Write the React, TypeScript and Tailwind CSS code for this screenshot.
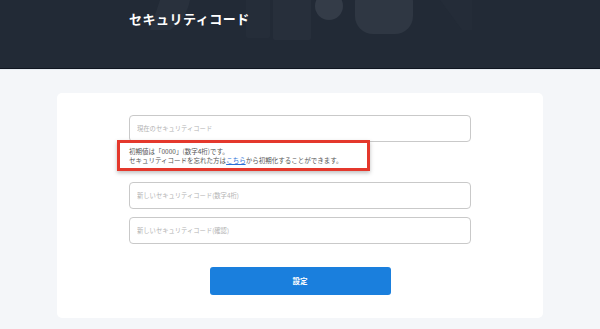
import React from "react";

const jp = { fontFamily: '"Noto Sans CJK JP", "Noto Sans", sans-serif' };

const Field: React.FC<{ placeholder: string }> = ({ placeholder }) => (
  <input
    type="text"
    placeholder={placeholder}
    className="block h-[27px] w-full rounded-[4px] border border-[#c9c9c9] bg-white px-[7px] text-[6.3px] text-[#333] outline-none placeholder:text-[#b3b3b3]"
    style={jp}
  />
);

// faint background shapes behind the page title
const HeaderArt = () => (
  <svg className="absolute left-0 top-0" width="600" height="68" viewBox="0 0 600 68">
    <path d="M160 0 H190 Q186 20 170 30 H150 Z" fill="#29313d" />
    <rect x="273" y="-6" width="38" height="46" rx="2" fill="#272f3b" />
    <rect x="246" y="-6" width="24" height="44" rx="2" fill="#252d39" />
    <circle cx="329" cy="6" r="14" fill="#343c48" />
    <rect x="355" y="-16" width="58" height="50" rx="18" fill="#2f3743" />
    <path d="M440 0 L462 30 H472 V0 Z" fill="#242c38" />
  </svg>
);

export default function App() {
  return (
    <div className="min-h-[329px] w-[600px] bg-[#f4f6f9]" style={jp}>
      <header className="relative h-[69px] overflow-hidden border-b border-[#0f1520] bg-[#222a36]">
        <HeaderArt />
        <div className="relative mx-auto w-[342px] pt-[9px]">
          <h1 className="text-[13px] font-bold leading-[20px] tracking-[0.5px] text-white">
            セキュリティコード
          </h1>
        </div>
      </header>
      <div className="h-px bg-[#e6ebf1]" />

      <main className="pt-[23px]">
        <div className="mx-auto w-[486px] rounded-[5px] bg-white pb-[23px] pt-[22px]">
          <div className="mx-auto w-[342px]">
            <Field placeholder="現在のセキュリティコード" />

            <div className="relative mt-[5px] text-[6.5px] leading-[9px] text-[#555]">
              <p>初期値は「0000」(数字4桁)です。</p>
              <p>
                セキュリティコードを忘れた方は
                <span className="text-[#2a6fd6] underline">こちら</span>
                から初期化することができます。
              </p>
              <div className="pointer-events-none absolute left-[-12px] top-[-7px] h-[31px] w-[253px] border-[3px] border-[#e4382c] shadow-[0_2px_4px_rgba(0,0,0,0.25)]" />
            </div>

            <div className="mt-[17px] flex flex-col gap-[8px]">
              <Field placeholder="新しいセキュリティコード(数字4桁)" />
              <Field placeholder="新しいセキュリティコード(確認)" />
            </div>

            <div className="mt-[23px] flex justify-center">
              <button className="h-[28px] w-[181px] rounded-[3px] bg-[#1a7fdd] text-[7.5px] font-bold text-white">
                設定
              </button>
            </div>
          </div>
        </div>
      </main>
    </div>
  );
}
